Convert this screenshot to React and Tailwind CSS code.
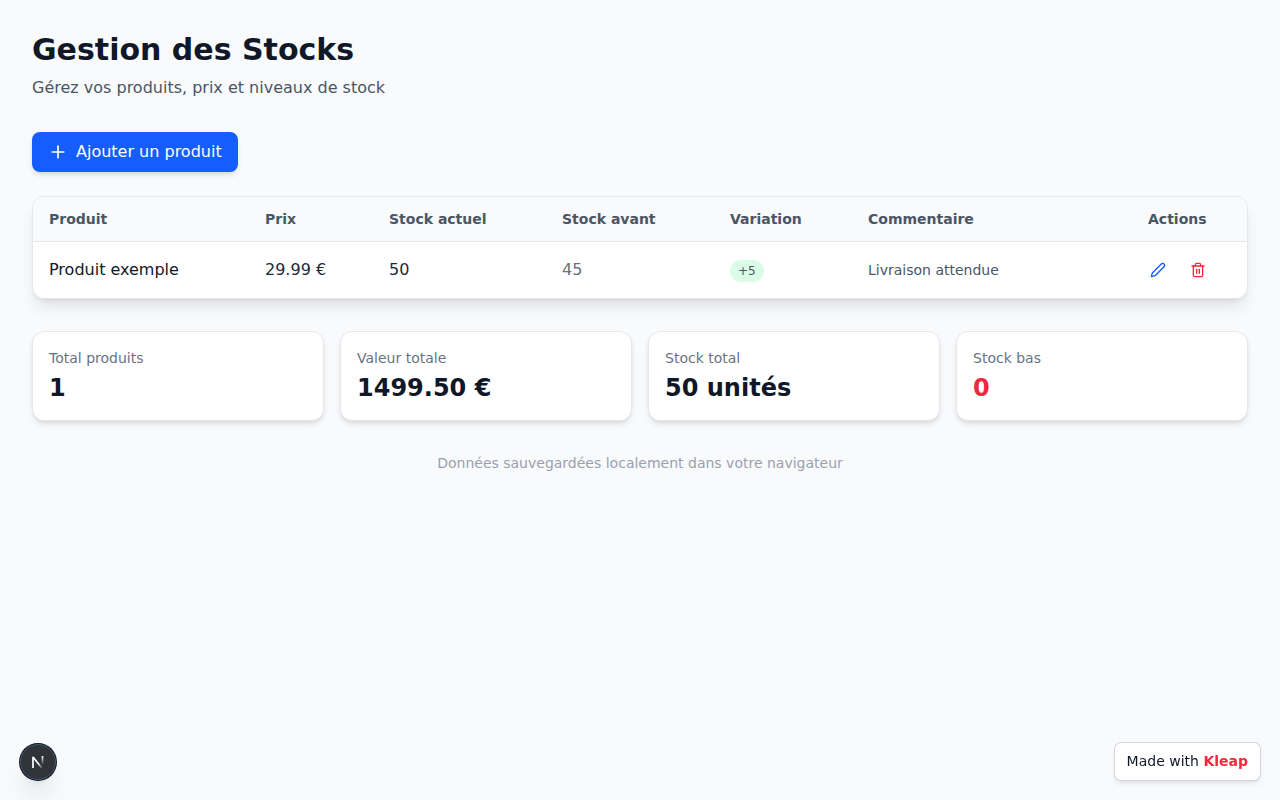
import { useState } from 'react';
import { FiEdit2, FiPlus, FiTrash2 } from 'react-icons/fi';

const INITIAL_PRODUCTS = [
  { id: 1, name: 'Produit exemple', price: 29.99, stock: 50, previous: 45, comment: 'Livraison attendue' },
];

const LOW_STOCK = 10;

const COLUMNS = [
  { label: 'Produit', width: 'w-[216px]' },
  { label: 'Prix', width: 'w-[124px]' },
  { label: 'Stock actuel', width: 'w-[173px]' },
  { label: 'Stock avant', width: 'w-[168px]' },
  { label: 'Variation', width: 'w-[138px]' },
  { label: 'Commentaire', width: 'w-[280px]' },
  { label: 'Actions', width: 'w-[115px]' },
];

function Variation({ value }) {
  const tone = value >= 0 ? 'bg-green-100' : 'bg-red-100';
  return (
    <span className={`inline-block rounded-full px-2 py-0.5 text-xs leading-[18px] text-gray-600 ${tone}`}>
      {value > 0 ? `+${value}` : value}
    </span>
  );
}

function StatCard({ label, value, tone = 'text-gray-900' }) {
  return (
    <div className="rounded-xl border border-gray-200 bg-white p-4 shadow-md">
      <p className="text-sm text-gray-500">{label}</p>
      <p className={`mt-1 text-2xl font-bold ${tone}`}>{value}</p>
    </div>
  );
}

function NextMark() {
  return (
    <svg width="14" height="14" viewBox="0 0 14 14" fill="none" strokeWidth="1.7">
      <defs>
        <linearGradient id="diagonal" x1="8" y1="8" x2="12" y2="13" gradientUnits="userSpaceOnUse">
          <stop stopColor="white" />
          <stop offset="1" stopColor="white" stopOpacity="0" />
        </linearGradient>
        <linearGradient id="stem" x1="11" y1="1" x2="11" y2="10" gradientUnits="userSpaceOnUse">
          <stop stopColor="white" />
          <stop offset="1" stopColor="white" stopOpacity="0" />
        </linearGradient>
      </defs>
      <path d="M2 13V2L12 14.5" stroke="url(#diagonal)" strokeLinejoin="bevel" />
      <path d="M11.5 1v10" stroke="url(#stem)" />
    </svg>
  );
}

export default function App() {
  const [products, setProducts] = useState(INITIAL_PRODUCTS);

  const add = () => {
    setProducts((prev) => [
      ...prev,
      { id: Date.now(), name: 'Nouveau produit', price: 0, stock: 0, previous: 0, comment: '' },
    ]);
  };
  const rename = (product) => {
    const name = window.prompt('Nom du produit', product.name);
    if (name) setProducts((prev) => prev.map((p) => (p.id === product.id ? { ...p, name } : p)));
  };
  const remove = (id) => setProducts((prev) => prev.filter((p) => p.id !== id));

  const totalValue = products.reduce((sum, p) => sum + p.price * p.stock, 0);
  const totalStock = products.reduce((sum, p) => sum + p.stock, 0);
  const lowStock = products.filter((p) => p.stock < LOW_STOCK).length;

  return (
    <div className="min-h-screen bg-gray-50 p-8 font-['DejaVu_Sans',sans-serif] text-gray-900">
      <main className="mx-auto max-w-7xl">
        <header className="mb-8">
          <h1 className="mb-2 text-3xl font-bold">Gestion des Stocks</h1>
          <p className="text-gray-600">Gérez vos produits, prix et niveaux de stock</p>
        </header>

        <button
          type="button"
          onClick={add}
          className="mb-6 flex items-center gap-2 rounded-lg bg-blue-600 px-4 py-2 text-white shadow-md hover:bg-blue-700"
        >
          <FiPlus size={20} />
          Ajouter un produit
        </button>

        <div className="overflow-hidden rounded-xl border border-gray-200 bg-white shadow-lg">
          <table className="w-full table-fixed text-left">
            <thead>
              <tr className="border-b border-gray-200 bg-gray-50 text-sm text-gray-600">
                {COLUMNS.map((col) => (
                  <th key={col.label} scope="col" className={`px-4 py-3 font-semibold ${col.width}`}>
                    {col.label}
                  </th>
                ))}
              </tr>
            </thead>
            <tbody>
              {products.map((p) => (
                <tr key={p.id}>
                  <td className="px-4 py-3">{p.name}</td>
                  <td className="px-4 py-3 text-gray-800">{p.price.toFixed(2)} €</td>
                  <td className="px-4 py-3 text-gray-800">{p.stock}</td>
                  <td className="px-4 py-3 text-gray-500">{p.previous}</td>
                  <td className="px-4 py-3">
                    <Variation value={p.stock - p.previous} />
                  </td>
                  <td className="px-4 py-3 text-sm text-gray-600">{p.comment}</td>
                  <td className="py-3 pr-4 pl-2.5">
                    <div className="flex gap-2">
                      <button type="button" aria-label="Modifier" onClick={() => rename(p)} className="p-2 text-blue-600">
                        <FiEdit2 size={16} />
                      </button>
                      <button type="button" aria-label="Supprimer" onClick={() => remove(p.id)} className="p-2 text-[#f5273c]">
                        <FiTrash2 size={16} />
                      </button>
                    </div>
                  </td>
                </tr>
              ))}
            </tbody>
          </table>
        </div>

        <section className="mt-8 grid grid-cols-4 gap-4">
          <StatCard label="Total produits" value={products.length} />
          <StatCard label="Valeur totale" value={`${totalValue.toFixed(2)} €`} />
          <StatCard label="Stock total" value={`${totalStock} unités`} />
          <StatCard label="Stock bas" value={lowStock} tone="text-[#f5273c]" />
        </section>

        <p className="mt-8 text-center text-sm text-gray-400">Données sauvegardées localement dans votre navigateur</p>
      </main>

      <button
        type="button"
        aria-label="Next.js"
        className="fixed bottom-5 left-5 flex size-9 items-center justify-center rounded-full border border-gray-600 bg-[#30343a] shadow-xl ring-1 ring-gray-900"
      >
        <NextMark />
      </button>

      <a
        href="#kleap"
        className="fixed right-5 bottom-5 rounded-md bg-white px-3 py-2 text-sm leading-[21px] shadow-md ring-1 ring-gray-300"
      >
        Made with <span className="font-bold text-[#f5273c]">Kleap</span>
      </a>
    </div>
  );
}
